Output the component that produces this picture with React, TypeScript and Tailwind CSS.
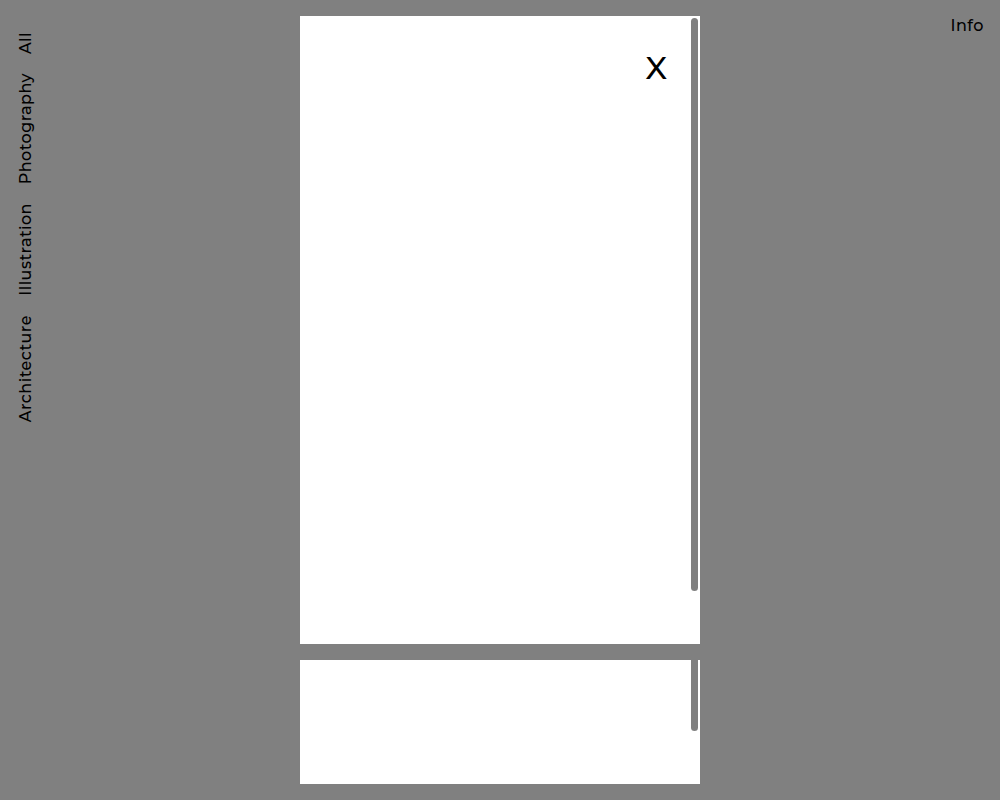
const categories = ["All", "Photography", "Illustration", "Architecture"];

export default function App() {
  return (
    <div className="flex h-screen items-start justify-between overflow-hidden bg-[#808080] font-['Montserrat','Inter',sans-serif] text-base leading-5 font-medium text-black">
      <nav aria-label="Categories" className="flex flex-1 flex-col items-start gap-[19px] pt-8 pl-4">
        {categories.map((name) => (
          <a key={name} href={`#${name.toLowerCase()}`} className="rotate-180 tracking-[0.03em] [writing-mode:vertical-rl]">
            {name}
          </a>
        ))}
      </nav>
      <main className="flex h-full w-2/5 flex-col gap-4 py-4">
        <section aria-label="Project" className="flex min-h-0 flex-1 justify-end gap-6 bg-white pr-[2px]">
          <button aria-label="Close" type="button" className="mt-8 h-10 text-[32px] leading-10">X</button>
          <div className="mt-[2px] mb-[53px] w-[7px] rounded-full bg-[#808080]" />
        </section>
        <section aria-label="Details" className="flex h-[124px] justify-end bg-white pr-[2px]">
          <div className="mb-[53px] w-[7px] rounded-b-full bg-[#808080]" />
        </section>
      </main>
      <div className="flex flex-1 justify-end pt-4 pr-4">
        <a href="#info" className="tracking-[0.03em]">Info</a>
      </div>
    </div>
  );
}
